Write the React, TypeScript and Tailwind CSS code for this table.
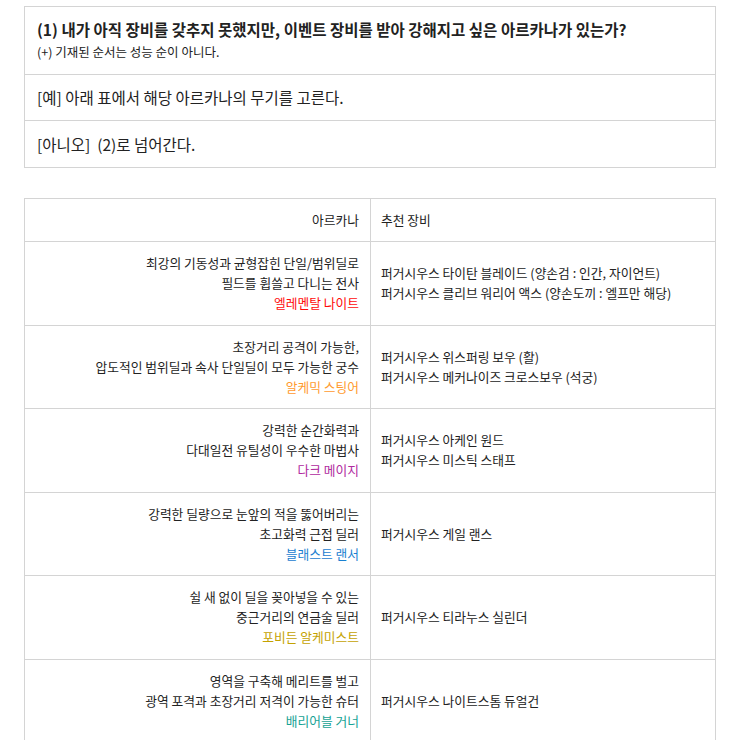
const arcana = [
  {
    desc: ["최강의 기동성과 균형잡힌 단일/범위딜로", "필드를 휩쓸고 다니는 전사"],
    name: "엘레멘탈 나이트",
    color: "text-[#ff0a0a]",
    gear: ["퍼거시우스 타이탄 블레이드 (양손검 : 인간, 자이언트)", "퍼거시우스 클리브 워리어 액스 (양손도끼 : 엘프만 해당)"],
  },
  {
    desc: ["초장거리 공격이 가능한,", "압도적인 범위딜과 속사 단일딜이 모두 가능한 궁수"],
    name: "알케믹 스팅어",
    color: "text-[#ff9a2e]",
    gear: ["퍼거시우스 위스퍼링 보우 (활)", "퍼거시우스 메커나이즈 크로스보우 (석궁)"],
  },
  {
    desc: ["강력한 순간화력과", "다대일전 유틸성이 우수한 마법사"],
    name: "다크 메이지",
    color: "text-[#b02a9e]",
    gear: ["퍼거시우스 아케인 원드", "퍼거시우스 미스틱 스태프"],
  },
  {
    desc: ["강력한 딜량으로 눈앞의 적을 뚫어버리는", "초고화력 근접 딜러"],
    name: "블래스트 랜서",
    color: "text-[#1a80d0]",
    gear: ["퍼거시우스 게일 랜스"],
  },
  {
    desc: ["쉴 새 없이 딜을 꽂아넣을 수 있는", "중근거리의 연금술 딜러"],
    name: "포비든 알케미스트",
    color: "text-[#c4a200]",
    gear: ["퍼거시우스 티라누스 실린더"],
  },
  {
    desc: ["영역을 구축해 메리트를 벌고", "광역 포격과 초장거리 저격이 가능한 슈터"],
    name: "배리어블 거너",
    color: "text-[#16a294]",
    gear: ["퍼거시우스 나이트스톰 듀얼건"],
  },
];

export default function App() {
  return (
    <div className="min-h-[740px] bg-white pl-6 pr-4 pt-[6px] font-['Noto_Sans_CJK_KR',sans-serif] text-[#222]">
      <div className="border border-[#d4d4d4]">
        <div className="px-3 pb-[12px] pt-[9px]">
          <div className="text-[15.5px] font-semibold leading-[26px]">
            (1) 내가 아직 장비를 갖추지 못했지만, 이벤트 장비를 받아 강해지고 싶은 아르카나가 있는가?
          </div>
          <div className="text-[12.5px] leading-[20px]">(+) 기재된 순서는 성능 순이 아니다.</div>
        </div>
        <div className="border-t border-[#d4d4d4] px-3 py-[11px] text-[15.5px] leading-[23px]">
          [예] 아래 표에서 해당 아르카나의 무기를 고른다.
        </div>
        <div className="border-t border-[#d4d4d4] px-3 py-[11px] text-[15.5px] leading-[24px]">
          [아니오]&nbsp; (2)로 넘어간다.
        </div>
      </div>

      <table className="mt-[30px] w-full border-collapse text-[12.75px] leading-[20.15px]">
        <thead>
          <tr>
            <th className="w-[346px] border border-[#d4d4d4] px-[11px] py-[11px] text-right font-normal">아르카나</th>
            <th className="border border-[#d4d4d4] px-[10px] py-[11px] text-left font-normal">추천 장비</th>
          </tr>
        </thead>
        <tbody>
          {arcana.map((a) => (
            <tr key={a.name}>
              <td className="border border-[#d4d4d4] px-[11px] py-[11px] text-right">
                {a.desc.map((d) => (
                  <div key={d}>{d}</div>
                ))}
                <div className={a.color}>{a.name}</div>
              </td>
              <td className="border border-[#d4d4d4] px-[10px] py-[11px] align-middle">
                {a.gear.map((g) => (
                  <div key={g}>{g}</div>
                ))}
              </td>
            </tr>
          ))}
        </tbody>
      </table>
    </div>
  );
}
